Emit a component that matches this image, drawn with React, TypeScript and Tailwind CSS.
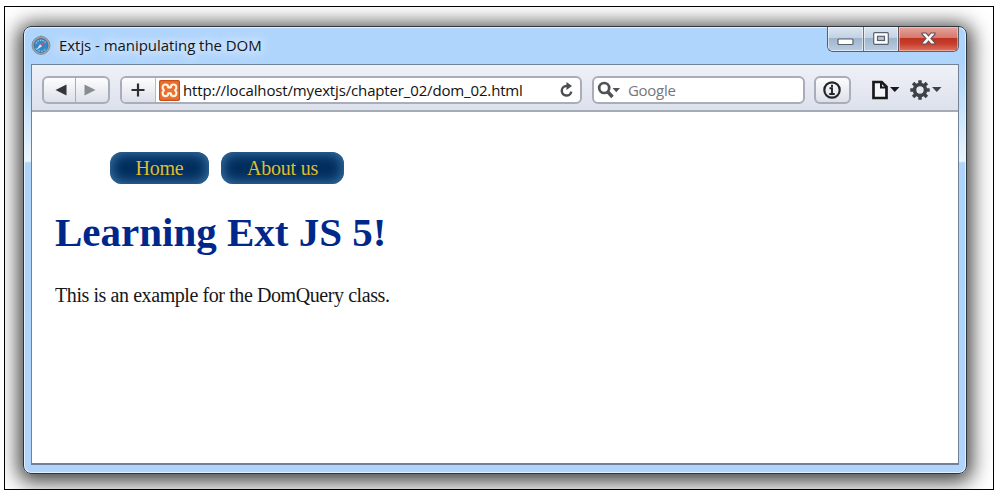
import React from "react";

const ui = "font-['Open_Sans','Noto_Sans',sans-serif]";
const control =
  "flex h-7 items-center rounded-[6px] border-2 border-[#a9adba]";
const face = "bg-linear-to-b from-[#fdfdfe] to-[#dde0e9]";

function SafariIcon() {
  return (
    <svg width="20" height="20" viewBox="0 0 20 20">
      <circle cx="10" cy="2" r="1.6" fill="#8f98a4" />
      <circle cx="10" cy="10.4" r="9" fill="#9ba5b2" stroke="#77818d" strokeWidth="0.8" />
      <circle cx="10" cy="10.4" r="7" fill="#3585c8" stroke="#496b8c" strokeWidth="0.8" />
      <path d="M5 8.5a5.5 5.5 0 0 1 10 0" fill="none" stroke="#91c7ea" strokeWidth="1.4" strokeDasharray="1.5 1" />
      <path d="M5 13a5.5 5.5 0 0 0 10 0" fill="none" stroke="#56c2ee" strokeWidth="1.6" strokeDasharray="2 1" />
      <path d="M14.5 5.8 9 9.3l2 2z" fill="#c85769" />
      <path d="M5.5 15 9 9.3l2 2z" fill="#dbe8f5" />
    </svg>
  );
}

function XamppIcon() {
  return (
    <svg width="21" height="21" viewBox="0 0 21 21" className="shrink-0">
      <rect x="0.6" y="0.6" width="19.8" height="19.8" rx="1.2" fill="#e9702d" stroke="#c94f1a" strokeWidth="1.2" />
      <path
        d="M6.500 4.500c-3 0-4 3.500-1.500 5.700-2.500 2.200-1.500 5.900 1.500 5.900 1.900 0 2.700-1.200 2.700-2.900h2.600c0 1.700.8 2.900 2.700 2.900 3 0 4-3.700 1.500-5.900 2.500-2.200 1.500-5.700-1.500-5.700-1.900 0-2.700 1.100-2.700 2.900H9.200c0-1.800-.8-2.900-2.700-2.900z"
        fill="none"
        stroke="#fff5e8"
        strokeWidth="2.100"
        strokeLinejoin="round"
      />
    </svg>
  );
}

function WindowButtons() {
  const glass =
    "bg-[linear-gradient(180deg,#dce6f1_0%,#c3d2e3_44%,#a0b4cb_48%,#b8cee5_100%)] shadow-[inset_0_0_0_1px_rgba(255,255,255,.55)]";
  return (
    <div className="flex h-[25px] w-[132px] overflow-hidden rounded-b-[6px] border border-t-0 border-[#53606f]">
      <div className={`flex w-9 items-center justify-center border-r border-[#66778a] ${glass}`}>
        <svg width="17" height="8" viewBox="0 0 17 8" className="mt-[5px]">
          <rect x="1" y="1" width="15" height="5.500" rx="1" fill="#fff" stroke="#59616c" strokeWidth="1.2" />
        </svg>
      </div>
      <div className={`flex w-[35px] items-center justify-center border-r border-[#66535c] ${glass}`}>
        <svg width="16" height="13" viewBox="0 0 16 13" className="-mt-px">
          <rect x="0.700" y="0.700" width="14.600" height="11.600" rx="1" fill="#fff" stroke="#59616c" strokeWidth="1.2" />
          <rect x="4.500" y="4.300" width="7" height="4.200" fill="#b4c5da" stroke="#59616c" strokeWidth="1.2" />
        </svg>
      </div>
      <div className="flex flex-1 items-center justify-center bg-[linear-gradient(180deg,#e5a59c_0%,#d6796d_44%,#bd3323_48%,#c83e2d_70%,#dd7463_100%)] shadow-[inset_0_0_0_1px_rgba(255,220,210,.5)]">
        <svg width="15" height="13" viewBox="0 0 15 13" className="-mt-px">
          <path
            d="M1 1h4l2.500 2.800L10 1h4v1.200l-4 4.300 4 4.300V12h-4L7.500 9.200 5 12H1v-1.200l4-4.300-4-4.300z"
            fill="#f8f8fa"
            stroke="#594f5b"
            strokeWidth="1.100"
          />
        </svg>
      </div>
    </div>
  );
}

function Toolbar() {
  return (
    <div className="flex h-[47px] items-center border-b-2 border-[#a6abb8] bg-linear-to-b from-[#eff1f8] to-[#dde1ec] pl-[10px] pt-[5px]">
      <div className={`${control} ${face} w-[68px]`}>
        <span className="flex h-full w-8 items-center justify-center border-r border-[#a8acb7]">
          <svg width="12" height="12" viewBox="0 0 12 12" className="ml-[2px]"><path d="M11.500 .5v11L.5 6z" fill="#323539" /></svg>
        </span>
        <span className="flex flex-1 items-center justify-center">
          <svg width="12" height="12" viewBox="0 0 12 12" className="-ml-1"><path d="M.5 .5v11L11.500 6z" fill="#898d93" /></svg>
        </span>
      </div>
      <div className={`${control} ml-[10px] w-[462px] overflow-hidden bg-white`}>
        <span className={`flex h-full w-[34px] items-center justify-center border-r border-[#b5b9c4] ${face}`}>
          <svg width="14" height="14" viewBox="0 0 14 14" className="-ml-px"><path d="M7 .5v13M.5 7h13" stroke="#2c2f33" strokeWidth="2.200" /></svg>
        </span>
        <span className="ml-[3px] flex"><XamppIcon /></span>
        <span className={`${ui} ml-[3px] whitespace-nowrap text-[15px] leading-5 tracking-[-0.15px] text-[#111]`}>
          http://localhost/myextjs/chapter_02/dom_02.html
        </span>
        <svg width="15" height="16" viewBox="0 0 15 16" className="ml-auto mr-[6px] shrink-0">
          <path d="M8.500 4H7a4.800 4.800 0 1 0 5.300 5.600" fill="none" stroke="#4b4c50" strokeWidth="2.400" />
          <path d="M7.500 0 13 4 7.500 8z" fill="#4b4c50" />
        </svg>
      </div>
      <div className={`${control} ml-[10px] w-[213px] bg-white`}>
        <svg width="24" height="18" viewBox="0 0 24 18" className="ml-[3px] shrink-0">
          <circle cx="7.200" cy="7" r="5" fill="none" stroke="#505155" strokeWidth="2.700" />
          <path d="m10.500 10.500 5 5.500" stroke="#505155" strokeWidth="3.400" />
          <path d="M15.500 7H23l-3.700 4.300z" fill="#505155" />
        </svg>
        <span className={`${ui} ml-[7px] text-[15px] leading-5 tracking-[-0.3px] text-[#75777b]`}>Google</span>
      </div>
      <div className={`${control} ${face} ml-[9px] w-[37px] justify-center`}>
        <svg width="18" height="18" viewBox="0 0 18 18" className="-ml-[2px]">
          <circle cx="9" cy="9" r="7.700" fill="none" stroke="#222426" strokeWidth="2.200" />
          <path d="M9 3.700v2.200M6.500 7.300H9V13M6.300 13h5.400" fill="none" stroke="#222426" strokeWidth="1.900" />
        </svg>
      </div>
      <svg width="29" height="20" viewBox="0 0 29 20" className="ml-5">
        <path d="M2.500 2h8.200l4.800 4.800V18h-13z" fill="#f3f4f8" stroke="#17191b" strokeWidth="2.700" />
        <path d="M10 1.500v6h6" fill="none" stroke="#17191b" strokeWidth="2" />
        <path d="M19 7h9.500l-4.700 5z" fill="#17191b" />
      </svg>
      <svg width="32" height="20" viewBox="0 0 32 20" className="ml-[10px]">
        <g transform="translate(10 10)" fill="none" stroke="#3d4247">
          <circle r="5.500" strokeWidth="3.600" />
          <path d="M0-6v-3.700M0 6v3.700M-6 0h-3.700M6 0h3.700M-4.200-4.200l-2.700-2.700M4.200-4.200l2.700-2.700M-4.200 4.200l-2.700 2.700M4.200 4.200l2.700 2.700" strokeWidth="3.500" />
        </g>
        <path d="M22 7h9.500l-4.700 5z" fill="#3d4247" />
      </svg>
    </div>
  );
}

function MenuLink({ children, width }: { children: React.ReactNode; width: string }) {
  return (
    <a className={`${width} flex h-8 items-center justify-center rounded-[12px] bg-[#002d5c] text-[20px] leading-8 tracking-[-0.2px] text-[#dfbd2b] shadow-[inset_0_0_13px_1px_#417bb0]`}>
      {children}
    </a>
  );
}

export default function App() {
  return (
    <div className="h-[495px] w-[998px] overflow-hidden bg-white pl-1 pt-[6px]">
      <div className="h-[484px] w-[990px] overflow-hidden border border-black bg-white pl-[18px] pt-[19px]">
        <div className="flex h-[448px] w-[944px] flex-col rounded-[8px] border border-[#30353b] bg-[linear-gradient(180deg,#b0d5fc_0px,#b0d5fc_36px,#b9dcfb_60px,#eaf5ff_134px,#aed4fb_136px,#b1d4fc_100%)] px-[7px] pb-2 shadow-[inset_0_0_0_1px_rgba(235,248,255,.8),0_3px_20px_5px_rgba(0,0,0,.75)]">
          <div className="flex h-[37px] shrink-0 items-start justify-between">
            <div className="flex items-center pt-[8px]">
              <SafariIcon />
              <span className={`${ui} ml-2 whitespace-nowrap text-[15px] leading-5 tracking-[-0.05px] text-[#10151b] [text-shadow:0_0_10px_#fff,0_0_14px_#fff]`}>
                Extjs - manipulating the DOM
              </span>
            </div>
            <WindowButtons />
          </div>
          <div className="min-h-0 flex-1 border border-b-2 border-[#718296] bg-white">
            <Toolbar />
            <main className="pl-[23px] pt-10 font-['Liberation_Serif',serif]">
              <nav className="ml-[55px] flex gap-3">
                <MenuLink width="w-[99px]">Home</MenuLink>
                <MenuLink width="w-[123px]">About us</MenuLink>
              </nav>
              <h1 className="mt-[25px] whitespace-nowrap text-[41px] leading-[46px] font-bold text-[#00288b]">Learning Ext JS 5!</h1>
              <p className="mt-[28px] whitespace-nowrap text-[20px] leading-6 tracking-[-0.42px] text-[#171717]">This is an example for the DomQuery class.</p>
            </main>
          </div>
        </div>
      </div>
    </div>
  );
}
